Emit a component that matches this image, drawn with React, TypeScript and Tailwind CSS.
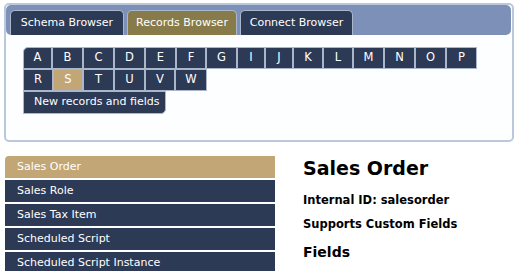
import React from "react";

const row1: [string, number][] = [
  ["A", 29], ["B", 31], ["C", 31], ["D", 31], ["E", 31], ["F", 30], ["G", 31], ["I", 28],
  ["J", 28], ["K", 30], ["L", 30], ["M", 31], ["N", 31], ["O", 31], ["P", 31],
];
const row2: [string, number][] = [["R", 30], ["S", 30], ["T", 31], ["U", 31], ["V", 30], ["W", 32]];

const records = ["Sales Order", "Sales Role", "Sales Tax Item", "Scheduled Script", "Scheduled Script Instance"];

const Tab = ({ title, active, width }: { title: string; active?: boolean; width: string }) => (
  <div
    className={`${width} h-[25px] flex items-center justify-center rounded-t-[5px] border border-b-0 border-[#a9b6cb] text-white text-[11px] ${
      active ? "bg-[#887b4a]" : "bg-[#2d3a56]"
    }`}
  >
    {title}
  </div>
);

const Letter = ({ l, w, active, first }: { l: string; w: number; active?: boolean; first?: boolean }) => (
  <div
    style={{ width: w }}
    className={`h-[22px] flex items-center justify-center border border-[#aab7cb] text-white text-[11.5px] ${
      active ? "bg-[#c2a676]" : "bg-[#2d3a56]"
    } ${first ? "rounded-tl-[5px]" : ""}`}
  >
    {l}
  </div>
);

export default function App() {
  return (
    <div className="w-[519px] h-[271px] overflow-hidden bg-white" style={{ fontFamily: '"DejaVu Sans", Verdana, sans-serif' }}>
      <div className="ml-[4px] mt-[3px] w-[510px] h-[139px] rounded-[5px] border-2 border-[#b9c8db] bg-[#fdfeff]">
        <div className="h-[30px] mr-[1px] rounded-[5px] bg-[#7d91b8] flex items-end gap-[3px] pl-[4px]">
          <Tab title="Schema Browser" width="w-[114px]" />
          <Tab title="Records Browser" width="w-[110px]" active />
          <Tab title="Connect Browser" width="w-[113px]" />
        </div>
        <div className="pl-[17px] pt-[12px] flex flex-col">
          <div className="flex">
            {row1.map(([l, w], i) => (
              <Letter key={l} l={l} w={w} first={i === 0} />
            ))}
          </div>
          <div className="flex">
            {row2.map(([l, w]) => (
              <Letter key={l} l={l} w={w} active={l === "S"} />
            ))}
          </div>
          <div className="w-[143px] h-[23px] flex items-center pl-[10px] whitespace-nowrap border border-[#aab7cb] rounded-br-[5px] bg-[#2d3a56] text-white text-[11px]">
            New records and fields
          </div>
        </div>
      </div>

      <div className="flex mt-[14px]">
        <div className="ml-[5px] w-[270px] flex flex-col gap-[2px]">
          {records.map((r, i) => (
            <div
              key={r}
              className={`h-[22px] flex items-center pl-[12px] text-white text-[11px] ${
                i === 0 ? "bg-[#c2a676] rounded-tl-[4px]" : "bg-[#2d3a56]"
              }`}
            >
              {r}
            </div>
          ))}
        </div>
        <div className="ml-[28px] text-black">
          <div className="text-[19px] font-bold leading-none mt-[3px]">Sales Order</div>
          <div className="text-[11.5px] font-bold mt-[14px]">Internal ID: salesorder</div>
          <div className="text-[11.5px] font-bold mt-[7px]">Supports Custom Fields</div>
          <div className="text-[14px] font-bold mt-[8px]">Fields</div>
        </div>
      </div>
    </div>
  );
}
